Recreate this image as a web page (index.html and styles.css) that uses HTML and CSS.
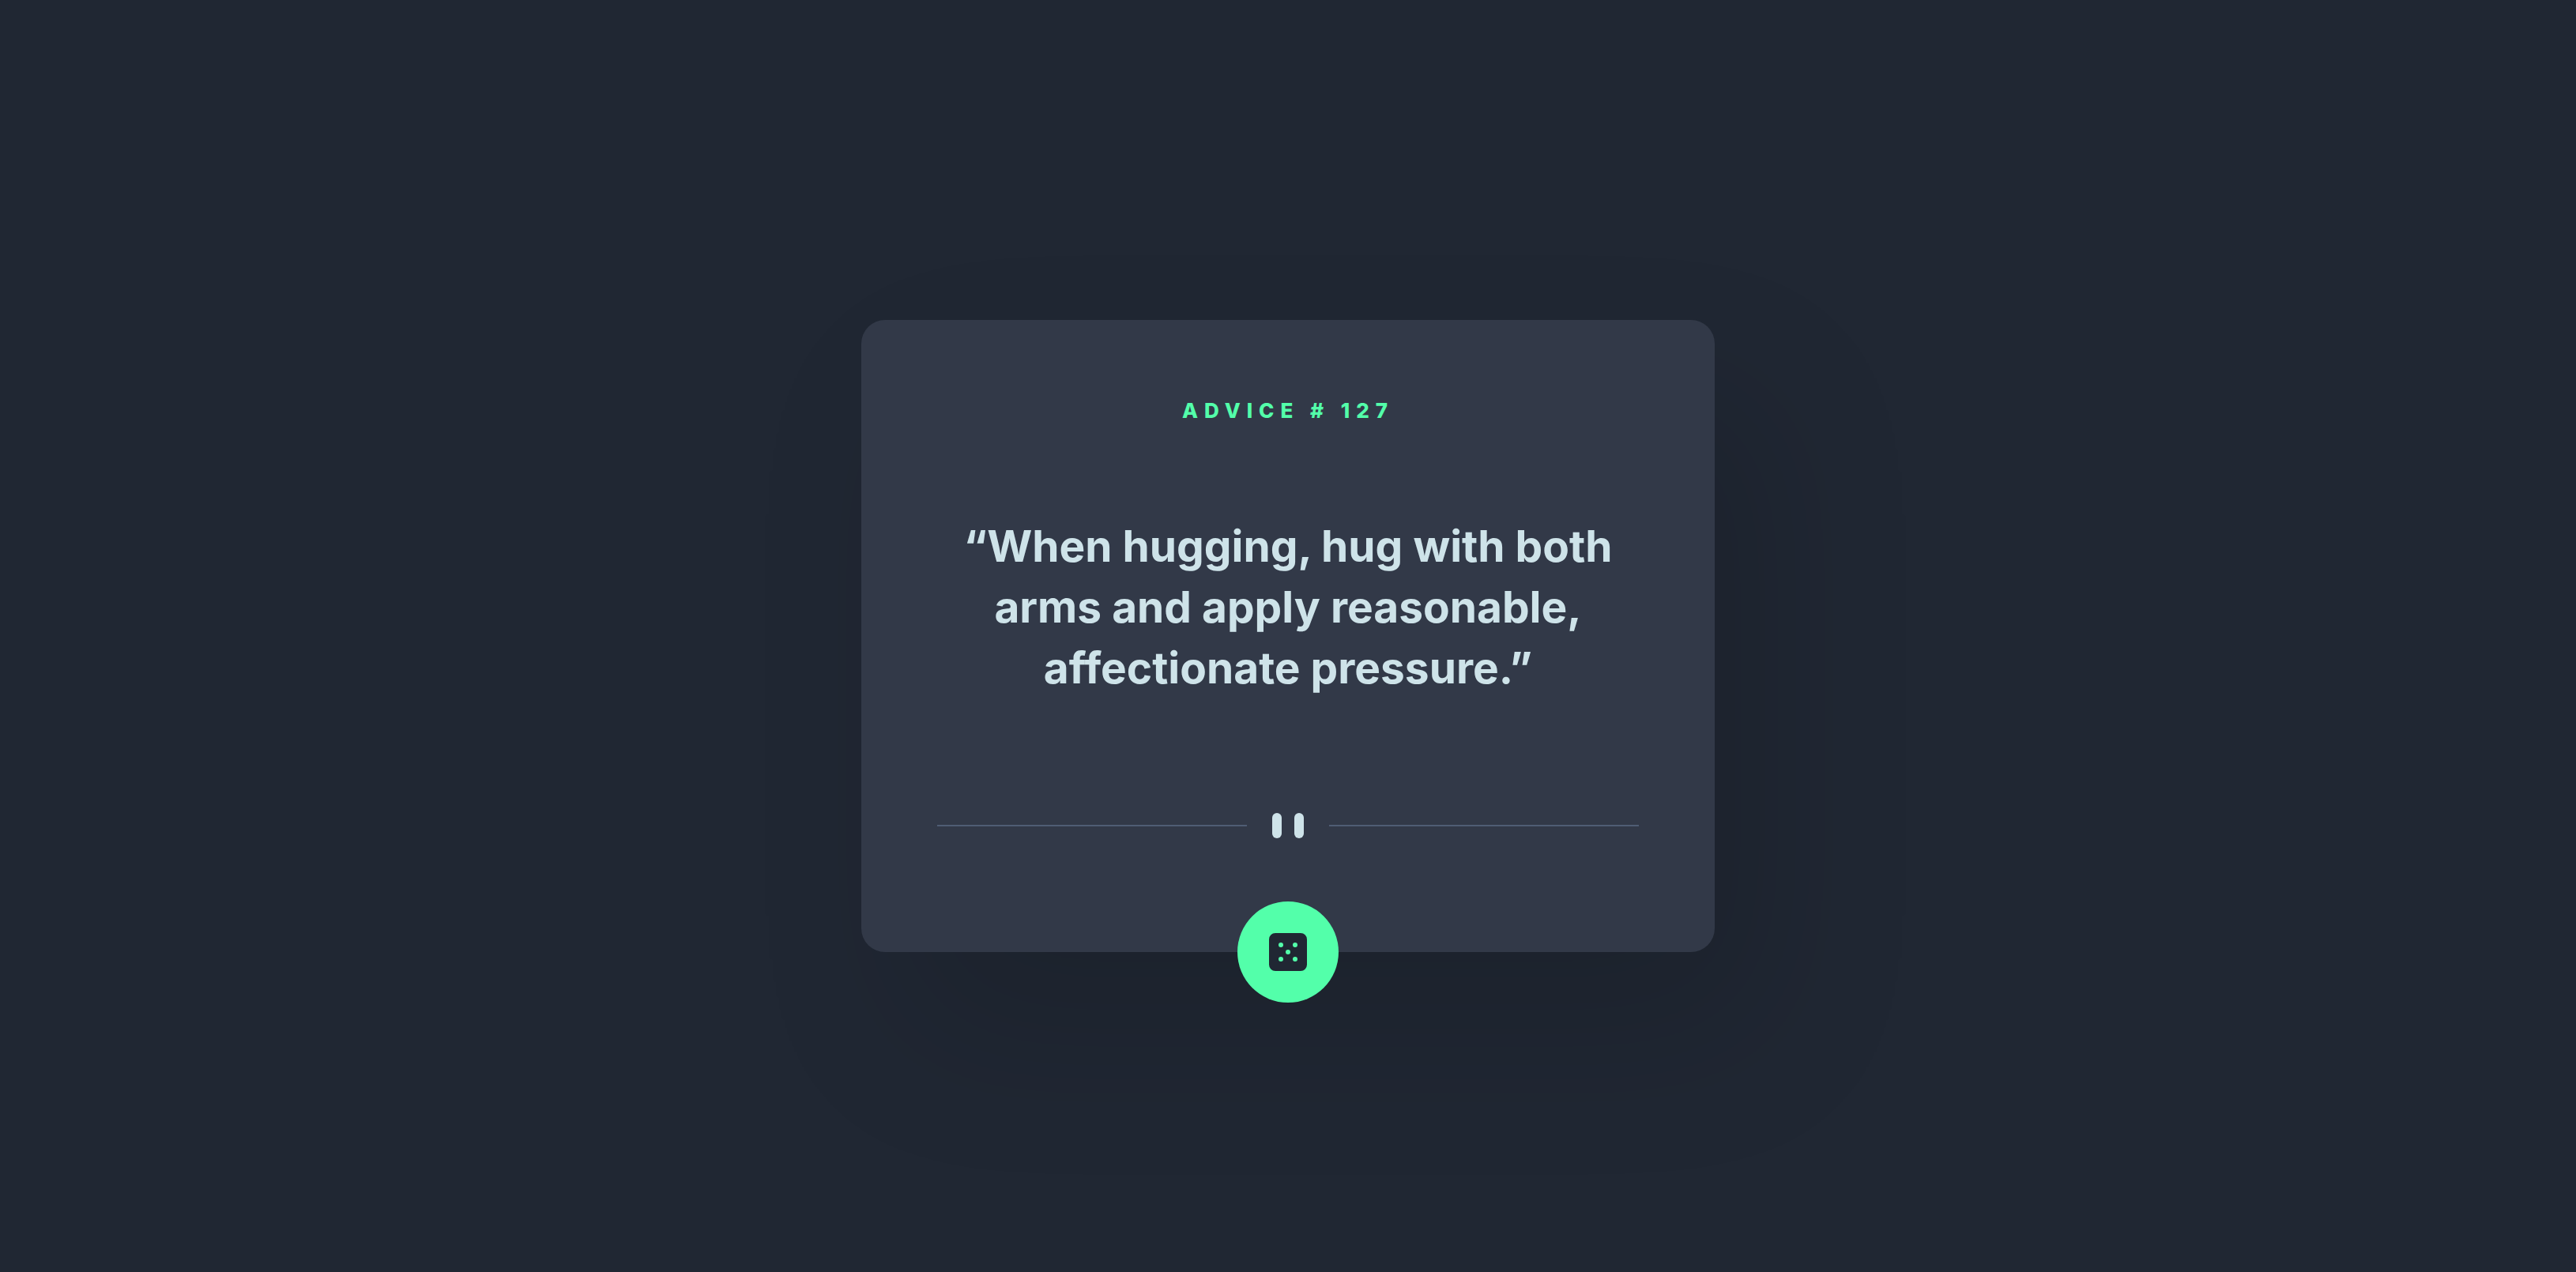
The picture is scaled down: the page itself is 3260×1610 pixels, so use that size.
FILE: index.html
```html
<!DOCTYPE html>
<html lang="en">
<head>
<meta charset="utf-8">
<meta name="viewport" content="width=device-width, initial-scale=1">
<title>Advice Generator</title>
<link rel="stylesheet" href="styles.css">
</head>
<body>
<main class="page">
  <article class="card">
    <h1 class="title">Advice # 127</h1>
    <p class="quote">“When hugging, hug with both arms and apply reasonable, affectionate pressure.”</p>
    <div class="divider" aria-hidden="true">
      <span class="line"></span>
      <span class="bars"><span class="bar"></span><span class="bar"></span></span>
      <span class="line"></span>
    </div>
    <button class="dice" type="button" aria-label="New advice">
      <svg width="48" height="48" viewBox="0 0 24 24" aria-hidden="true"><path fill="#202733" d="M20 0H4a4.005 4.005 0 0 0-4 4v16a4.005 4.005 0 0 0 4 4h16a4.005 4.005 0 0 0 4-4V4a4.005 4.005 0 0 0-4-4ZM7.500 18a1.500 1.500 0 1 1 0-3 1.500 1.500 0 0 1 0 3Zm0-9a1.500 1.500 0 1 1 0-3 1.500 1.500 0 0 1 0 3Zm4.500 4.500a1.500 1.500 0 1 1 0-3 1.500 1.500 0 0 1 0 3Zm4.500 4.500a1.500 1.500 0 1 1 0-3 1.500 1.500 0 0 1 0 3Zm0-9a1.500 1.500 0 1 1 0-3 1.500 1.500 0 0 1 0 3Z"/></svg>
    </button>
  </article>
</main>
</body>
</html>
```
FILE: styles.css
```css
* { box-sizing: border-box; }

body {
  margin: 0;
  background: #202733;
  font-family: Inter, "Liberation Sans", sans-serif;
}

.page {
  min-height: 100vh;
  display: flex;
  align-items: center;
  justify-content: center;
}

.card {
  width: 100%;
  max-width: 1080px;
  padding: 96px 96px 0;
  display: flex;
  flex-direction: column;
  align-items: center;
  text-align: center;
  background: #323948;
  border-radius: 30px;
  box-shadow: 60px 100px 200px rgba(0, 0, 0, 0.13);
}

.title {
  margin: 0;
  font-size: 26px;
  line-height: 38px;
  font-weight: 800;
  letter-spacing: 8px;
  text-transform: uppercase;
  color: #53ffaa;
}

.quote {
  margin: 114px 0 145px;
  max-width: 840px;
  font-size: 55px;
  line-height: 77px;
  font-weight: 700;
  color: #cee3e9;
}

.divider {
  width: 100%;
  display: flex;
  align-items: center;
  gap: 32px;
}

.line {
  flex: 1;
  height: 2px;
  background: #4f5d74;
}

.bars {
  display: flex;
  gap: 16px;
}

.bar {
  width: 12px;
  height: 32px;
  border-radius: 6px;
  background: #cee3e9;
}

.dice {
  width: 128px;
  height: 128px;
  margin: 80px 0 -64px;
  padding: 0;
  display: flex;
  align-items: center;
  justify-content: center;
  border: 0;
  border-radius: 50%;
  background: #53ffaa;
  cursor: pointer;
}
```
